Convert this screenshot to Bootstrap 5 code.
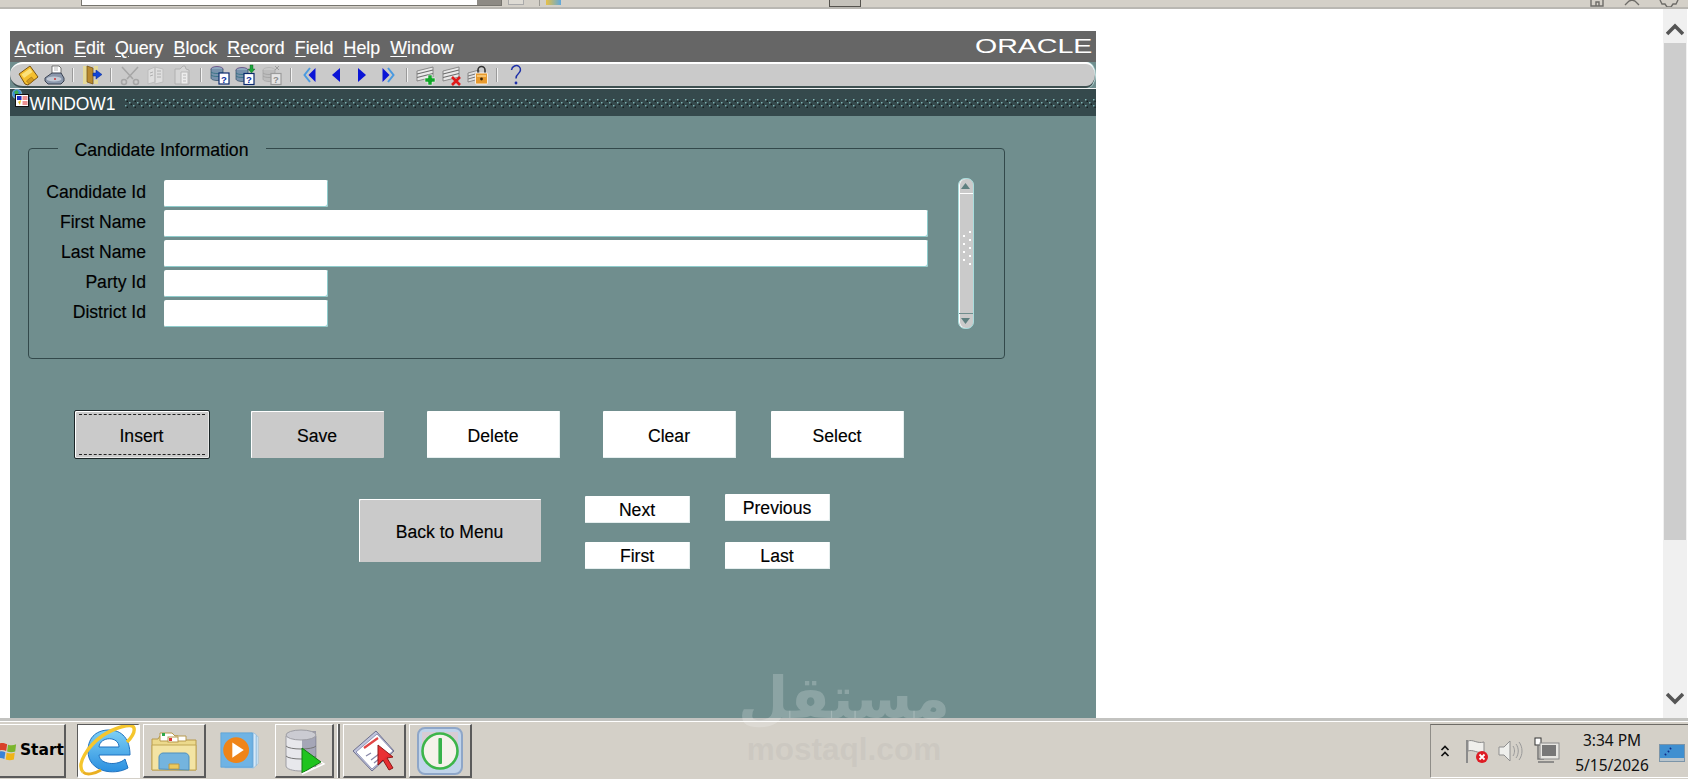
<!DOCTYPE html>
<html lang="en">
<head>
<meta charset="utf-8">
<title>Oracle Forms - WINDOW1</title>
<link href="https://cdn.jsdelivr.net/npm/bootstrap@5.3.0/dist/css/bootstrap.min.css" rel="stylesheet">
<style>
html,body{height:100%;margin:0;overflow:hidden;background:#fff}
body{font-family:"Liberation Sans",Arial,sans-serif;color:#000}
.shell{height:779px;width:1688px}
.ie-top{height:9px;background:#d4d0c8;border-bottom:2px solid #b9b7b2;flex:none;overflow:hidden}
.ie-back{width:81px;padding-left:2px}
.ie-addr{width:421px;height:6px;background:#fff;border:1px solid #77756f;border-top:0;justify-content:flex-end}
.ie-addr i{display:block;width:24px;height:5px;background:#8d8a84}
.ie-btn1{width:16px;height:5px;background:#dedbd4;border:1px solid #aaa;border-top:0;margin-left:6px}
.ie-sep{width:1px;height:6px;background:#9c9a94;margin-left:15px}
.ie-ico{width:15px;height:5px;background:linear-gradient(90deg,#e8c045,#5fa8dc);margin-left:6px}
.ie-tab{width:32px;height:7px;background:#c5c2bb;border:1px solid #55534e;border-top:0;margin-left:268px}
.ie-right{margin-left:auto;padding-right:8px;gap:18px}
.mid{flex:1 1 auto;min-height:0}
.gutter{width:9.5px;flex:none}
.app{width:1086.5px;flex:none;margin-top:22px;background:#708e8e;position:relative}
.menubar{height:31px;background:#666;color:#fff;font-size:17.8px;padding:3px 0 0 5px;position:relative;-webkit-text-stroke:.15px #fff}
.menubar a{color:#fff;text-decoration:none;margin-right:10.2px}
.menubar u{text-underline-offset:2px}
.orcl{position:absolute;right:4px;top:3px;font-size:21px;line-height:24px;color:#fff;transform:scaleX(1.36);transform-origin:right center;font-weight:400;-webkit-text-stroke:0}
.toolbar{height:26px;background:#cacaca;border-top:2px solid #fff;border-bottom:2px solid #3d4f50;border-radius:13px 9px 9px 13px/13px;padding-left:5.5px;margin-right:1px;box-shadow:1px 0 0 #b8dada}
.tbi{width:26px;height:22px;flex:none}
.tbs{width:12px;height:16px;flex:none}
.tbs i{display:block;width:2px;height:14px;background:#f2f2f2;border-left:1px solid #9a9a9a;margin:1px auto 0}
.titlebar{height:28px;background:#35494c;border-top:1px solid #f1f3f3;color:#fff;font-size:17.5px;position:relative}
.titlebar b{font-weight:400;margin-left:20px;letter-spacing:-.1px;padding-top:4px}
.wicon{position:absolute;left:2.5px;top:0}
.dots{flex:1 1 auto;height:10px;margin-left:9px;margin-top:1px}
.pane{padding:32px 0 0 18px}
.frame{width:977px;height:211px;border:1px solid #33494b;border-radius:4px;position:relative;padding:31px 0 0 0}
.legend-t{position:absolute;left:29px;top:-9px;padding:0 17px;background:#708e8e;font-size:17.7px;line-height:20px;color:#000;-webkit-text-stroke:.15px #000}
.frow{height:27px;margin-bottom:3px}
.lab{width:117.5px;text-align:right;font-size:17.6px;line-height:25px;flex:none;color:#000;-webkit-text-stroke:.15px #000;white-space:nowrap}
.fld{height:27px;border:0;border-radius:2px;background:#fff;box-shadow:inset -1px -1px 0 #8fcccc;margin-left:18px;padding:0;display:block}
.f-s{width:164px}
.f-l{width:764px}
.formcols{position:relative}
.sbar{position:absolute;left:929px;top:-2px;width:16px;height:151px;background:#cacaca;border:1px solid #a8dcdc;border-radius:7px;box-shadow:inset 1px 0 0 #fff}
.sbar .up,.sbar .dn{height:15px;display:flex;align-items:center;justify-content:center}
.sbar .up{border-bottom:1px solid #fff}
.sbar .dn{border-top:1px solid #708e8e;height:15px;position:absolute;bottom:0;left:0;right:0}
.sgrip{position:absolute;left:3px;top:52px}
.btnrow{padding:52px 0 0 46px}
.fbtn{background:#fff;border:0;border-radius:1px;color:#000;font-size:17.6px;font-family:"Liberation Sans",Arial,sans-serif;padding:3px 0 0;display:flex;align-items:center;justify-content:center;box-shadow:inset -1px -1px 0 #e5eeee;-webkit-text-stroke:.15px #000}
.fbtn:hover{background:#fff;color:#000}
.gry,.gry:hover{background:#cacaca;box-shadow:inset 1px 1px 0 #fff}
.bigb{width:133px;height:47px}
.ins{width:136px;height:49px;border:1px solid #1b2527;border-radius:2px;position:relative;margin-right:41px;margin-top:-1px;box-shadow:inset -1px -1px 0 #e8e8e8,inset 1px 1px 0 #fff}
.ins::before,.ins::after{content:"";position:absolute;left:4px;right:4px;border-top:1px dashed #222}
.ins::before{top:3px}.ins::after{bottom:3px}
.g43{margin-right:43px}.g35{margin-right:35px}
.row2{padding:40px 0 0 331px}
.backb{width:182px;height:63px;padding-top:4px}
.minis{margin-left:44px;margin-top:-3px;gap:35px}
.minib{width:105px;height:27px;padding-top:1px}
.mcol{gap:19px}
.up2{margin-top:-2px;padding-top:2px}.dn2{margin-top:2px}
.vbar{margin-left:auto;width:24px;flex:none;margin-right:1px;background:#f0f0f0;position:relative}
.vthumb{position:absolute;left:1px;right:1px;top:34px;height:497px;background:#cdcdcd}
.vup{position:absolute;left:3px;top:14px}
.vdn{position:absolute;left:3px;top:683px}
.wm{position:absolute;left:738px;top:662px;width:212px;text-align:center;pointer-events:none;z-index:5}
.wm1{font-family:"DejaVu Sans",sans-serif;font-weight:700;font-size:58px;line-height:72px;display:block;white-space:nowrap;color:rgba(255,255,255,.2)}
.wm2{font-family:"Liberation Sans",sans-serif;font-weight:700;font-size:31.5px;line-height:30px;display:block;color:rgba(170,170,165,.2);white-space:nowrap}
.taskbar{height:61px;flex:none;background:#d4d0c8;border-top:3px solid #c3c3c0;box-shadow:inset 0 1px 0 #fff;padding-top:3px;position:relative;font-family:"Noto Sans",sans-serif}
.tk{height:54px;flex:none;border:1px solid #fff;border-right:2px solid #5b5b5b;border-bottom:2px solid #5b5b5b;background:#d4d0c8;display:flex;align-items:center;justify-content:center}
.startb{width:67px;margin-left:-1px;border-left:0;padding-left:0;justify-content:flex-start;gap:2px;font-family:"DejaVu Sans",sans-serif;font-weight:700;font-size:15.5px;overflow:hidden;margin-right:11px}
.iebtn{width:63px;background:#fff;border:1px solid #5b5b5b;border-right:2px solid #fff;border-bottom:2px solid #fff;margin-right:3px}
.flb{width:63px;margin-right:11px}
.plain{width:44px;height:54px;flex:none;display:flex;align-items:center;justify-content:center;margin-right:14px}
.dbb{width:59px;margin-right:3px}
.dvd{width:3px;height:54px;background:#5b5b5b;border-left:1px solid #fff;margin-right:3px;flex:none}
.pb1{width:63px;margin-right:3px}.pb2{width:63px}
.tray{margin-left:auto;width:258px;height:54px;border:1px solid #8f8d88;border-right:0;border-top-color:#6d6b66;border-bottom-color:#fff;padding-left:9px;position:relative}
.clk{position:absolute;left:136px;width:90px;text-align:center;font-size:15.5px;line-height:25px;top:3px;color:#111}
.dsk{position:absolute;right:3px;top:19px}
</style>
</head>
<body>
<div class="shell d-flex flex-column">
  <div class="ie-top d-flex">
    <div class="ie-back">
      <svg width="60" height="7" viewBox="0 0 60 7"><circle cx="13" cy="-7" r="12" fill="#e6e4df" stroke="#8b8a86"/><circle cx="40" cy="-7" r="11" fill="#e6e4df" stroke="#9a9994"/></svg>
    </div>
    <div class="ie-addr d-flex"><i></i></div>
    <div class="ie-btn1"></div>
    <div class="ie-sep"></div>
    <div class="ie-ico"></div>
    <div class="ie-tab"></div>
    <div class="ie-right d-flex">
      <svg width="18" height="7" viewBox="0 0 18 7"><path d="M3 0v6h12V0M8 6V2h3v4" fill="none" stroke="#6e6c68" stroke-width="1.4"/></svg>
      <svg width="16" height="7" viewBox="0 0 16 7"><path d="M1 5 5 1 8 0M15 5 11 1 8 0" fill="none" stroke="#6e6c68" stroke-width="1.4"/></svg>
      <svg width="22" height="7" viewBox="0 0 22 7"><path d="M2 0l2 4h3l2 3h4l2-3h3l2-4" fill="none" stroke="#6e6c68" stroke-width="1.4"/></svg>
    </div>
  </div>

  <div class="mid d-flex">
    <div class="gutter"></div>
    <div class="app">
      <div class="menubar d-flex align-items-center">
        <a href="#"><u>A</u>ction</a><a href="#"><u>E</u>dit</a><a href="#"><u>Q</u>uery</a><a href="#"><u>B</u>lock</a><a href="#"><u>R</u>ecord</a><a href="#"><u>F</u>ield</a><a href="#"><u>H</u>elp</a><a href="#"><u>W</u>indow</a>
        <span class="orcl">ORACLE</span>
      </div>
      <div class="toolbar d-flex align-items-center">
        <svg class="tbi" viewBox="0 0 26 22"><path d="M4 10 15 2l8 11-10 8-3-1z" fill="#f4bf2e" stroke="#7a520e"/><path d="M6.500 10.500 15 4.500l2.500 3.500-8.500 6z" fill="#fbe27a"/><path d="M11.500 17l5-4 2.500 3-5 4z" fill="#d19a20" stroke="#8a5f10" stroke-width=".5"/></svg>
        <svg class="tbi" viewBox="0 0 26 22"><path d="M11 2h7l2 2v8h-9z" fill="#fff" stroke="#555" stroke-width=".8"/><path d="M4 14l7-5h9l3 5v3l-3 3H7l-3-3z" fill="#8a97ab" stroke="#3c4454"/><ellipse cx="13" cy="15" rx="7.500" ry="2.500" fill="#c2cad6"/><circle cx="14" cy="15" r="1" fill="#c33"/><path d="M13 4h4M13 6h4" stroke="#999" stroke-width=".7"/></svg>
        <span class="tbs"><i></i></span>
        <svg class="tbi" viewBox="0 0 26 22"><path d="M4 2h4v18H4zM15 2h4v4h-4zM15 16h4v4h-4z" fill="#efe08a" opacity=".75"/><path d="M8 2l6 2v16l-6-2z" fill="#b98a2e" stroke="#6b4a12" stroke-width=".7"/><path d="M14 9h3V6l6 4.500-6 4.500v-3h-3z" fill="#1245d8" stroke="#0a2a88" stroke-width=".5"/></svg>
        <span class="tbs"><i></i></span>
        <svg class="tbi" viewBox="0 0 26 22" fill="none" stroke="#a6a6a6" stroke-width="1.600"><path d="M5 3l11 12M21 3 10 15"/><circle cx="7" cy="18" r="2.500"/><circle cx="19" cy="18" r="2.500"/></svg>
        <svg class="tbi" viewBox="0 0 26 22"><path d="M5 6l7-3v15l-7 2zM12 3l8 2v13l-8 2z" fill="#dedede" stroke="#bdbdbd"/><path d="M14 7h4M14 10h4M14 13h4M7 9l3-1M7 12l3-1" stroke="#a9a9a9" stroke-width=".9"/></svg>
        <svg class="tbi" viewBox="0 0 26 22"><path d="M6 5h5l3-3h2l1 3 3 1v14H6z" fill="#d6d6d6" stroke="#b0b0b0"/><path d="M12 8h7v12h-7z" fill="#ececec" stroke="#b8b8b8"/><path d="M14 11h3M14 14h3M14 17h3" stroke="#b3b3b3" stroke-width=".9"/></svg>
        <span class="tbs"><i></i></span>
        <svg class="tbi" viewBox="0 0 26 22"><ellipse cx="10" cy="5" rx="6" ry="2.500" fill="#8fa8c0" stroke="#305" stroke-width=".5"/><path d="M4 5v9c0 1.500 3 2.500 6 2.500s6-1 6-2.500V5" fill="#7892ac" stroke="#2c4a66" stroke-width=".7"/><path d="M4 8c2 2 10 2 12 0M4 11c2 2 10 2 12 0" stroke="#2d6f7f" fill="none" stroke-width=".8"/><rect x="12" y="9" width="10" height="11" fill="#fff" stroke="#0b2a6e" stroke-width="1.200"/><text x="17" y="18.500" font-size="9.500" font-weight="700" fill="#0a2ea0" text-anchor="middle" font-family="Liberation Sans">?</text></svg>
        <svg class="tbi" viewBox="0 0 26 22"><ellipse cx="9" cy="6" rx="6" ry="2.500" fill="#8fa8c0" stroke="#305" stroke-width=".5"/><path d="M3 6v9c0 1.500 3 2.500 6 2.500s6-1 6-2.500V6" fill="#7892ac" stroke="#2c4a66" stroke-width=".7"/><path d="M3 9c2 2 10 2 12 0M3 12c2 2 10 2 12 0" stroke="#2d6f7f" fill="none" stroke-width=".8"/><path d="M17 1v4h-2l3.500 4L22 5h-2V1z" fill="#1aa53a" stroke="#0a5a1c" stroke-width=".4"/><rect x="11" y="9.500" width="10" height="11" fill="#fff" stroke="#0b2a6e" stroke-width="1.200"/><text x="16" y="19" font-size="9.500" font-weight="700" fill="#0a2ea0" text-anchor="middle" font-family="Liberation Sans">?</text></svg>
        <svg class="tbi" viewBox="0 0 26 22"><ellipse cx="10" cy="6" rx="6" ry="2.500" fill="#c8c8c8" stroke="#a4a4a4" stroke-width=".5"/><path d="M4 6v9c0 1.500 3 2.500 6 2.500s6-1 6-2.500V6" fill="#bdbdbd" stroke="#a2a2a2" stroke-width=".7"/><path d="M4 9c2 2 10 2 12 0M4 12c2 2 10 2 12 0" stroke="#a0a0a0" fill="none" stroke-width=".8"/><path d="M16 2l4 4M20 2l-4 4" stroke="#9c9c9c"/><rect x="12" y="9.500" width="10" height="11" fill="#e5e5e5" stroke="#9b9b9b" stroke-width="1.200"/><text x="17" y="19" font-size="9.500" font-weight="700" fill="#8d8d8d" text-anchor="middle" font-family="Liberation Sans">?</text></svg>
        <span class="tbs"><i></i></span>
        <svg class="tbi" viewBox="0 0 26 22"><path d="M18.500 4v14L11.500 11z" fill="#0a14d6"/><path d="M13 4l-5.500 7 5.500 7" fill="none" stroke="#4a9ae0" stroke-width="2"/></svg>
        <svg class="tbi" viewBox="0 0 26 22"><path d="M17 4v14L9 11z" fill="#0a14d6"/></svg>
        <svg class="tbi" viewBox="0 0 26 22"><path d="M9 4v14l8-7z" fill="#0a14d6"/></svg>
        <svg class="tbi" viewBox="0 0 26 22"><path d="M7.500 4v14l7-7z" fill="#0a14d6"/><path d="M13 4l5.500 7-5.500 7" fill="none" stroke="#4a9ae0" stroke-width="2"/></svg>
        <span class="tbs"><i></i></span>
        <svg class="tbi" viewBox="0 0 26 22"><path d="M4 7l16-4v10L4 17z" fill="#e9e9e9" stroke="#777" stroke-width=".8"/><path d="M4 10 20 6M4 13.500l16-4" stroke="#6d6d6d" stroke-width="1.200"/><path d="M15 11h4v3h3v4h-3v3h-4v-3h-3v-4h3z" fill="#12a52a" stroke="#fff" stroke-width=".5"/></svg>
        <svg class="tbi" viewBox="0 0 26 22"><path d="M4 7l16-4v10L4 17z" fill="#e9e9e9" stroke="#777" stroke-width=".8"/><path d="M4 10 20 6M4 13.500l16-4" stroke="#6d6d6d" stroke-width="1.200"/><path d="M13 13l8 8M21 13l-8 8" stroke="#e01a1a" stroke-width="2.600"/></svg>
        <svg class="tbi" viewBox="0 0 26 22"><path d="M3 9l11-3v9L3 18z" fill="#e0e0e0" stroke="#777" stroke-width=".8"/><path d="M3 12l11-3M3 15l11-3" stroke="#777"/><path d="M13 9V6a3.500 3.500 0 0 1 7 0v3" fill="none" stroke="#333" stroke-width="1.600"/><rect x="10.500" y="9" width="12" height="11" rx="1" fill="#e79a2e" stroke="#fff" stroke-width=".8"/><path d="M12 11h9v2h-9z" fill="#f7c470"/><circle cx="16.500" cy="15" r="1.400" fill="#3a2408"/></svg>
        <span class="tbs"><i></i></span>
        <svg class="tbi" viewBox="0 0 26 22"><path d="M8.500 6C9 2 13.500.5 16 2.500S17.500 8 15.500 9.500c-1.500 1.300-2.500 2.500-2.500 5" fill="none" stroke="#1d2fa8" stroke-width="1.500"/><circle cx="13" cy="19" r="1.400" fill="#1d2fa8"/></svg>
      </div>
      <div class="titlebar d-flex align-items-center">
        <svg class="wicon" width="18" height="19" viewBox="0 0 18 19"><circle cx="5" cy="5" r="4.800" fill="#3d8fd6" stroke="#dfe" stroke-width=".4"/><path d="M2 3l3-2 2 3-3 2z" fill="#3fae4e"/><rect x="3.500" y="5.500" width="13" height="12" fill="#fff" stroke="#111"/><path d="M5 7h4.500v4H5z" fill="#1e2fc2"/><path d="M6 13l3-2-1 5z" fill="#e8c020"/><path d="M10.500 8h5M10.500 10h5M10.500 13h5M10.500 15h5" stroke="#d22" stroke-width="1"/></svg>
        <b>WINDOW1</b>
        <svg class="dots" height="10"><defs><pattern id="dp" width="8" height="10" patternUnits="userSpaceOnUse"><rect x="1" y="1" width="1.500" height="1.500" fill="#85b7b7"/><rect x="2.500" y="2.500" width="1.500" height="1.500" fill="#16201f"/><rect x="5" y="4" width="1.500" height="1.500" fill="#7cb0b0"/><rect x="6.500" y="5.500" width="1.500" height="1.500" fill="#16201f"/><rect x="1" y="7" width="1.500" height="1.500" fill="#78aeae"/><rect x="2.500" y="8.500" width="1.500" height="1.500" fill="#16201f"/></pattern></defs><rect width="100%" height="10" fill="url(#dp)"/></svg>
      </div>
      <div class="pane">
        <div class="frame">
          <span class="legend-t">Candidate Information</span>
          <div class="formcols">
            <div class="frow d-flex"><label class="lab">Candidate Id</label><input class="fld f-s" type="text" aria-label="Candidate Id"></div>
            <div class="frow d-flex"><label class="lab">First Name</label><input class="fld f-l" type="text" aria-label="First Name"></div>
            <div class="frow d-flex"><label class="lab">Last Name</label><input class="fld f-l" type="text" aria-label="Last Name"></div>
            <div class="frow d-flex"><label class="lab">Party Id</label><input class="fld f-s" type="text" aria-label="Party Id"></div>
            <div class="frow d-flex"><label class="lab">District Id</label><input class="fld f-s" type="text" aria-label="District Id"></div>
            <div class="sbar">
              <div class="up"><svg width="9" height="6" viewBox="0 0 9 6"><path d="M4.500 0 9 6H0z" fill="#5f8080"/></svg></div>
              <svg class="sgrip" width="10" height="36" viewBox="0 0 10 36"><g fill="#fff"><rect x="7" y="0" width="2" height="2"/><rect x="1" y="4" width="2" height="2"/><rect x="7" y="8" width="2" height="2"/><rect x="1" y="12" width="2" height="2"/><rect x="7" y="16" width="2" height="2"/><rect x="1" y="20" width="2" height="2"/><rect x="7" y="24" width="2" height="2"/><rect x="1" y="28" width="2" height="2"/><rect x="7" y="32" width="2" height="2"/></g></svg>
              <div class="dn"><svg width="9" height="6" viewBox="0 0 9 6"><path d="M0 0h9L4.500 6z" fill="#5f8080"/></svg></div>
            </div>
          </div>
        </div>
        <div class="btnrow d-flex align-items-start">
          <button class="btn fbtn gry ins" type="button">Insert</button>
          <button class="btn fbtn gry bigb g43" type="button">Save</button>
          <button class="btn fbtn bigb g43" type="button">Delete</button>
          <button class="btn fbtn bigb g35" type="button">Clear</button>
          <button class="btn fbtn bigb" type="button">Select</button>
        </div>
        <div class="row2 d-flex align-items-start">
          <button class="btn fbtn gry backb" type="button">Back to Menu</button>
          <div class="d-flex minis">
            <div class="d-flex flex-column mcol"><button class="btn fbtn minib" type="button">Next</button><button class="btn fbtn minib" type="button">First</button></div>
            <div class="d-flex flex-column mcol"><button class="btn fbtn minib up2" type="button">Previous</button><button class="btn fbtn minib dn2" type="button">Last</button></div>
          </div>
        </div>
      </div>
    </div>
    <div class="vbar">
      <svg class="vup" width="18" height="13" viewBox="0 0 18 13"><path d="M1 11 9 3l8 8" fill="none" stroke="#555" stroke-width="3.600"/></svg>
      <div class="vthumb"></div>
      <svg class="vdn" width="18" height="13" viewBox="0 0 18 13"><path d="M1 2l8 8 8-8" fill="none" stroke="#555" stroke-width="3.600"/></svg>
    </div>
  </div>

  <div class="taskbar d-flex">
    <div class="tk startb">
      <svg width="21" height="24" viewBox="0 0 21 24" class="flex-none"><path d="M0 4c3-1.500 5-1 9 .5l-1 7.500c-3-1.500-5-1.500-8-.5z" fill="#d8402a"/><path d="M10 5c3 1 6 1 9-.5l-1 8c-3 1-6 1-9 0z" fill="#7bb52d"/><path d="M-1 13c3-1 5-1 8 .5l-1 7.500c-3-1.500-5-1.500-8-.5z" fill="#3a82d6"/><path d="M8.500 14c3 1 6 1 9 0l-1 7.500c-3 1-6 1-9 0z" fill="#f0b418"/></svg>
      <span>Start</span>
    </div>
    <div class="tk iebtn">
      <svg width="60" height="51" viewBox="0 0 60 51"><defs><linearGradient id="ieg" x1="0" y1="0" x2="0" y2="1"><stop offset="0" stop-color="#7fd0f5"/><stop offset="1" stop-color="#2a8fe0"/></linearGradient></defs><path fill-rule="evenodd" d="M52 30H21C22 40 40 41 47 34L50 43C36 51 10 47 10 26 10 11 20 5 31 5 44 5 52 14 52 30ZM21 22H41C41 11 22 11 21 22Z" fill="url(#ieg)" stroke="#1f72c0"/><path d="M5 47C-2 39 10 21 24 11 36 3 54-3 56 3 57 7 53 13 49 17" fill="none" stroke="#f5c62d" stroke-width="3.400"/><path d="M5 47C9 51 18 48 23 45" fill="none" stroke="#eab022" stroke-width="3"/></svg>
    </div>
    <div class="tk flb">
      <svg width="50" height="48" viewBox="0 0 50 48"><path d="M3 12h6l2-3h18l3 4h15v30H3z" fill="#ecd98c" stroke="#b89a4c"/><path d="M11 6h12l3 3h11v5H11z" fill="#fff" stroke="#b89a4c"/><rect x="13" y="6" width="3" height="3" fill="#2da84a"/><rect x="19" y="10" width="10" height="5" fill="#fff" stroke="#b89a4c"/><rect x="20" y="11" width="3" height="3" fill="#d33"/><path d="M3 18h44v25H3z" fill="#f3e4a4" stroke="#c1a654"/><path d="M10 42V30c0-2 2-4 4-4h22c2 0 4 2 4 4v13z" fill="#74b4de" stroke="#4e8fbd"/><path d="M20 42v-5h10v5z" fill="#ecc95c" stroke="#b89a4c"/></svg>
    </div>
    <div class="plain">
      <svg width="46" height="44" viewBox="0 0 46 44"><path d="M8 4l30-1 3 2v32l-3 3H8z" fill="#98c6ea"/><path d="M38 3l3 2v32l-3 3zM41 6l2 1v28l-2 2z" fill="#d7e9f7" stroke="#7fb2da" stroke-width=".5"/><path d="M4 3h33v36H4z" fill="#6fb3e4" stroke="#4d97d0" stroke-width=".6"/><circle cx="20" cy="21" r="13.500" fill="#ef8418"/><path d="M16 13l12 8-12 8z" fill="#fff"/></svg>
    </div>
    <div class="tk dbb">
      <svg width="44" height="48" viewBox="0 0 44 48"><path d="M4 9v30c0 3 7 5 15 5s15-2 15-5V9z" fill="#e8e8ec" stroke="#9d9da3"/><path d="M20 4h14v36H20z" fill="#6d6f8d" opacity=".55"/><ellipse cx="19" cy="8" rx="15" ry="5" fill="#cbcbd2" stroke="#9d9da3"/><path d="M4 19c3 4 27 4 30 0M4 29c3 4 27 4 30 0" fill="none" stroke="#777"/><path d="M20 21l19 14-19 11z" fill="#1fc41f" stroke="#137a13"/><path d="M39 35l3 2-22 10" fill="none" stroke="#fff" stroke-width="1.500"/></svg>
    </div>
    <div class="dvd"></div>
    <div class="tk pb1">
      <svg width="46" height="46" viewBox="0 0 46 46"><path d="M2 23 25 3l18 20-22 20z" fill="#c0c4dc" stroke="#6d6f8d"/><path d="M5 24 26 6l16 17-21 18z" fill="#fff" stroke="#9296b8"/><path d="M13 20 27 10" stroke="#e14545" stroke-width="2.200"/><path d="M15 28l5-3M20 32l8-6M23 35l5-4" stroke="#8888a8" stroke-width="1.300"/><path d="M27 17v20l5-5 6 10 4-2-6-10 6-1z" fill="#e9262a" stroke="#8c1010" opacity=".95"/></svg>
    </div>
    <div class="tk pb2">
      <svg width="50" height="50" viewBox="0 0 50 50"><rect x="3" y="2" width="44" height="46" rx="7" fill="#c1d4ea" stroke="#8ea6c8" stroke-width="2"/><rect x="7" y="6" width="36" height="18" fill="#f0c4c0" opacity=".5"/><circle cx="25" cy="25" r="17.500" fill="#f5f2ea" stroke="#3cb54a" stroke-width="2.600"/><rect x="23.400" y="12" width="3.600" height="26" rx="1" fill="#37b24a"/></svg>
    </div>
    <div class="tray d-flex align-items-center">
      <svg width="10" height="14" viewBox="0 0 10 14" fill="none" stroke="#111" stroke-width="1.700"><path d="M1.500 6 5 2.500 8.500 6M1.500 12 5 8.500 8.500 12"/></svg>
      <svg width="26" height="26" viewBox="0 0 26 26" style="margin-left:14px"><path d="M3 2v23" stroke="#8b8b8b" stroke-width="2"/><path d="M4 3c5-2 9 3 16 1v10c-6 2-11-3-16-1z" fill="#f0efec" stroke="#8b8b8b"/><circle cx="18" cy="19" r="6" fill="#de1c24"/><path d="M15.500 16.500l5 5M20.500 16.500l-5 5" stroke="#fff" stroke-width="1.800"/></svg>
      <svg width="26" height="24" viewBox="0 0 26 24" style="margin-left:7px" fill="none"><path d="M2 8h5l6-6v20l-6-6H2z" fill="#efefec" stroke="#8f8f8f"/><path d="M16 7c2 3 2 7 0 10M19 5c3 4 3 10 0 14M22 3c4 5 4 13 0 18" stroke="#9a9a9a"/></svg>
      <svg width="26" height="28" viewBox="0 0 26 28" style="margin-left:11px"><rect x="1" y="1" width="6" height="7" fill="#fff" stroke="#333"/><path d="M4 8v14h6M4 25h16" stroke="#777" stroke-width="1.500" fill="none"/><rect x="6" y="6" width="19" height="16" fill="#e6e5e1" stroke="#8a8a8a"/><rect x="8" y="8" width="14" height="11" fill="#777"/></svg>
      <div class="clk">3:34 PM<br>5/15/2026</div>
      <svg class="dsk" width="26" height="18" viewBox="0 0 26 18"><rect x=".5" y=".5" width="25" height="17" fill="#3f8fd0" stroke="#7b94a8"/><path d="M1 14h24v3H1z" fill="#b8c4cc"/><path d="M6 11l1-1M9 8l1-1M11 5l1-1" stroke="#102a88" stroke-width="2"/></svg>
    </div>
  </div>
</div>
<div class="wm"><span class="wm1" dir="rtl">مستقل</span><span class="wm2">mostaql.com</span></div>
<script src="https://cdn.jsdelivr.net/npm/bootstrap@5.3.0/dist/js/bootstrap.bundle.min.js"></script>
</body>
</html>
